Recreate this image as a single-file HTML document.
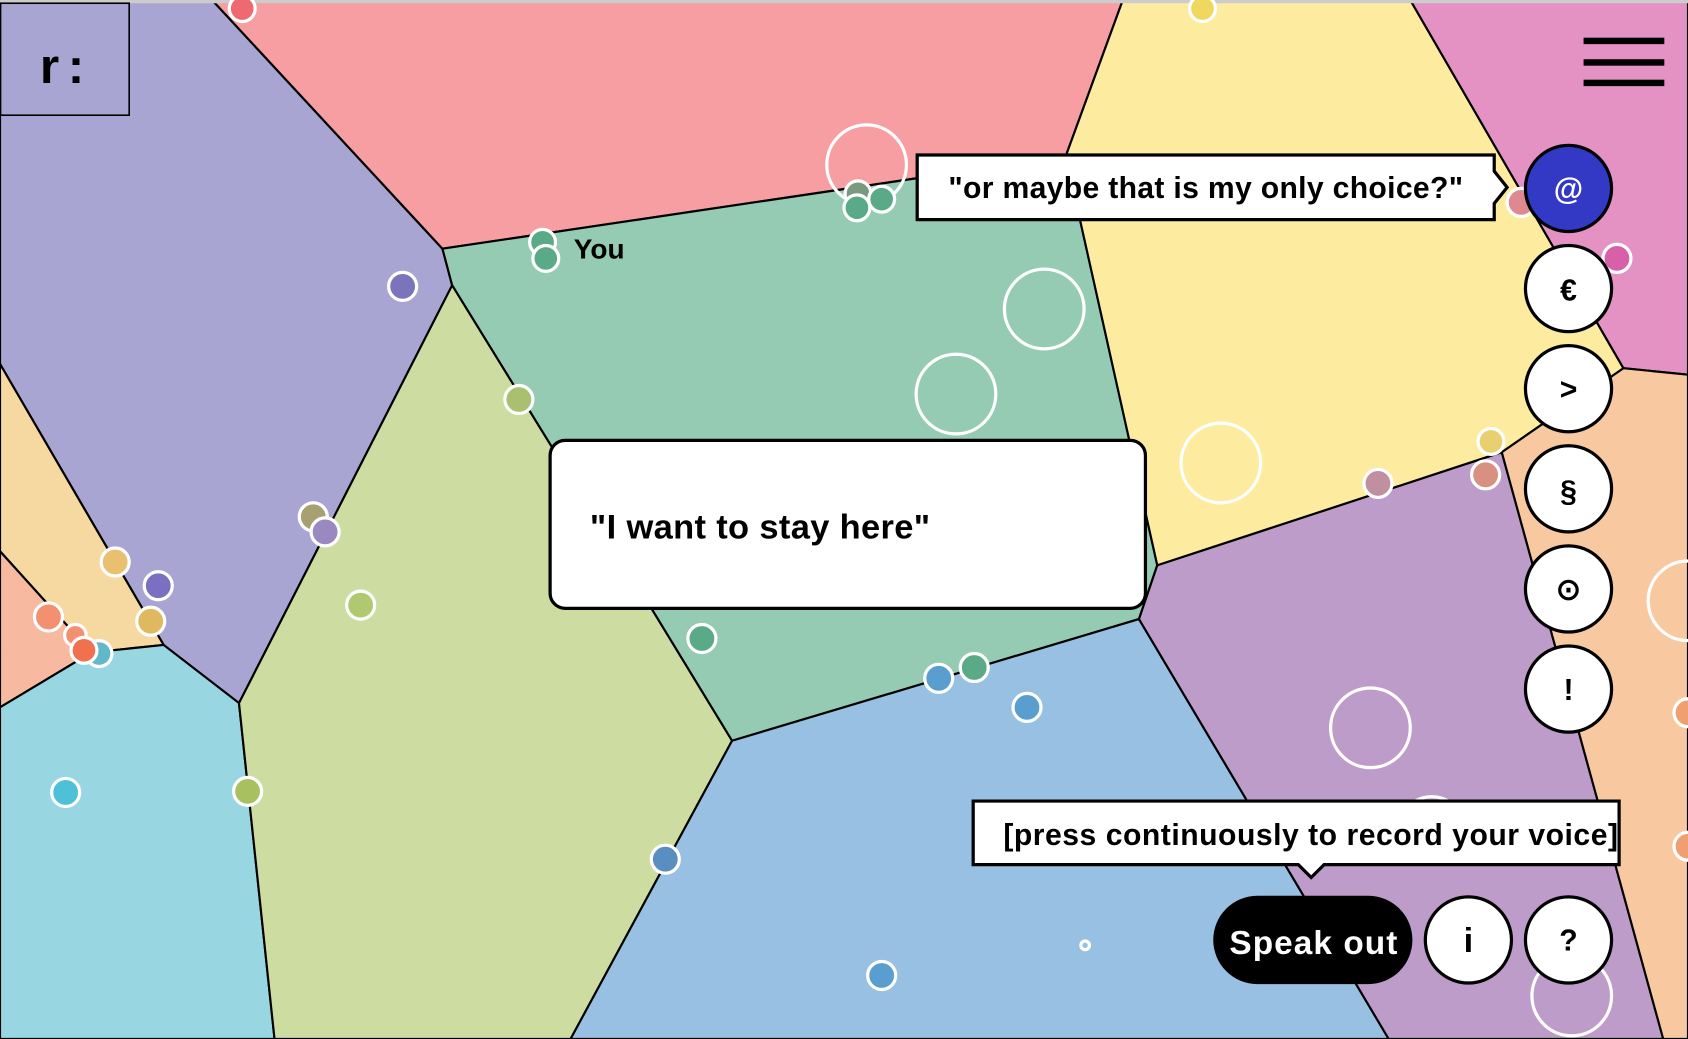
<!DOCTYPE html>
<html><head><meta charset="utf-8"><style>
html,body{margin:0;padding:0;width:1688px;height:1039px;overflow:hidden;background:#fff}
svg{display:block}
text{font-family:"Liberation Sans",sans-serif;font-weight:bold}
</style></head><body>
<svg width="1688" height="1039" viewBox="0 0 1568 965" preserveAspectRatio="none">
<g stroke="#000" stroke-width="2" stroke-linejoin="round">
<polygon fill="#a9a5d3" points="0,0 197,0 411,231 420,265 222,653 152,599 0,338"/>
<polygon fill="#f6d9a0" points="0,338 152,599 85,606 0,512"/>
<polygon fill="#f7b9a0" points="0,512 85,606 0,657"/>
<polygon fill="#98d6e2" points="0,657 85,606 152,599 222,653 255,965 0,965"/>
<polygon fill="#f69ea2" points="197,0 1043,0 990,145 411,231"/>
<polygon fill="#95cbb3" points="411,231 990,145 1075,525 1058,575 680,688 605,565 420,265"/>
<polygon fill="#cddda2" points="420,265 605,565 680,688 530,965 255,965 222,653"/>
<polygon fill="#98c0e2" points="680,688 1058,575 1290,965 530,965"/>
<polygon fill="#bd9cc9" points="1058,575 1075,525 1395,420 1545,965 1290,965"/>
<polygon fill="#fdeca0" points="1043,0 1310,0 1508,342 1395,420 1075,525 990,145"/>
<polygon fill="#e491c4" points="1310,0 1568,0 1568,348 1508,342"/>
<polygon fill="#f8c9a0" points="1508,342 1568,348 1568,965 1545,965 1395,420"/>
</g>
<rect x="0" y="0" width="1568" height="3" fill="#ccc"/>
<g fill="none" stroke="#fff" stroke-width="3">
<circle cx="805" cy="153" r="37"/><circle cx="970" cy="287" r="37"/><circle cx="888" cy="366" r="37"/>
<circle cx="1134" cy="430" r="37"/><circle cx="1273" cy="676" r="37"/><circle cx="1568" cy="558" r="37"/>
<circle cx="1460" cy="925" r="37"/><circle cx="1330" cy="770" r="30"/>
</g>
<g stroke="#fff" stroke-width="3">
<circle cx="225" cy="8" r="12" fill="#ee6a70"/><circle cx="1117" cy="8" r="12" fill="#f0d860"/>
<circle cx="504" cy="225" r="12" fill="#5aaa88"/><circle cx="507" cy="240" r="12" fill="#5aaa88"/>
<circle cx="797" cy="180" r="12" fill="#7a9a80"/><circle cx="819" cy="185" r="12" fill="#5aaa88"/><circle cx="796" cy="193" r="12" fill="#5aaa88"/>
<circle cx="374" cy="266" r="13" fill="#7a74bd"/><circle cx="482" cy="371" r="13" fill="#a8c070"/>
<circle cx="291" cy="480" r="13" fill="#a8a070"/><circle cx="302" cy="494" r="13" fill="#9a88c0"/>
<circle cx="107" cy="522" r="13" fill="#e8c070"/><circle cx="147" cy="544" r="13" fill="#7a6fc0"/>
<circle cx="140" cy="577" r="13" fill="#e0b860"/><circle cx="45" cy="573" r="13" fill="#f39070"/>
<circle cx="70" cy="590" r="10" fill="#f39070"/><circle cx="92" cy="607" r="12" fill="#60b8c8"/>
<circle cx="78" cy="604" r="12" fill="#f07050"/>
<circle cx="335" cy="562" r="13" fill="#b0c870"/><circle cx="652" cy="593" r="13" fill="#5aaa88"/>
<circle cx="872" cy="630" r="13" fill="#5a9ed0"/><circle cx="905" cy="620" r="13" fill="#5aaa88"/>
<circle cx="954" cy="657" r="13" fill="#5a9ed0"/><circle cx="61" cy="736" r="13" fill="#4ec0d8"/>
<circle cx="230" cy="735" r="13" fill="#a8c060"/><circle cx="618" cy="798" r="13" fill="#5a8ec0"/>
<circle cx="819" cy="906" r="13" fill="#5a9ed0"/><circle cx="1008" cy="878" r="4" fill="#98c0e2"/>
<circle cx="1280" cy="449" r="13" fill="#c090a0"/><circle cx="1380" cy="441" r="13" fill="#d89080"/>
<circle cx="1385" cy="410" r="12" fill="#e8d070"/><circle cx="1413" cy="188" r="13" fill="#e08890"/>
<circle cx="1502" cy="240" r="13" fill="#d860a8"/><circle cx="1568" cy="662" r="13" fill="#f0a070"/>
<circle cx="1568" cy="786" r="13" fill="#f0a070"/>
</g>
<rect x="0.5" y="3" width="119.5" height="104" fill="none" stroke="#000" stroke-width="1.5"/>
<text x="37" y="77" font-size="46" letter-spacing="8">r:</text>
<text x="533" y="240" font-size="26">You</text>
<rect x="1471" y="35" width="75" height="6"/><rect x="1471" y="55" width="75" height="6"/><rect x="1471" y="74" width="75" height="6"/>
<polygon points="852,144 1388,144 1388,159 1400,174 1388,189 1388,204 852,204" fill="#fff" stroke="#000" stroke-width="3"/>
<text x="881" y="184" font-size="28" textLength="478">"or maybe that is my only choice?"</text>
<rect x="511" y="409" width="553" height="156" rx="14" fill="#fff" stroke="#000" stroke-width="3"/>
<text x="548" y="500" font-size="32" textLength="316">"I want to stay here"</text>
<g stroke="#000" stroke-width="3">
<circle cx="1457" cy="175" r="40" fill="#3439c5"/>
<circle cx="1457" cy="268" r="40" fill="#fff"/><circle cx="1457" cy="361" r="40" fill="#fff"/>
<circle cx="1457" cy="454" r="40" fill="#fff"/><circle cx="1457" cy="547" r="40" fill="#fff"/>
<circle cx="1457" cy="640" r="40" fill="#fff"/>
<circle cx="1364" cy="873" r="40" fill="#fff"/><circle cx="1457" cy="873" r="40" fill="#fff"/>
</g>
<g font-size="28" text-anchor="middle">
<text x="1457" y="185" fill="#fff">@</text>
<text x="1457" y="279">€</text><text x="1457" y="371">&gt;</text>
<text x="1457" y="466">§</text><text x="1457" y="557">⊙</text><text x="1457" y="650">!</text>
<text x="1364" y="884" font-size="32">i</text><text x="1457" y="883">?</text>
</g>
<rect x="1127" y="832" width="185" height="82" rx="41" fill="#000"/>
<text x="1142" y="886" font-size="31" fill="#fff" textLength="156">Speak out</text>
<polygon points="904,744 1504,744 1504,803 1230,803 1218,815 1206,803 904,803" fill="#fff" stroke="#000" stroke-width="3"/>
<text x="932" y="785" font-size="28" textLength="571">[press continuously to record your voice]</text>
</svg>
</body></html>
